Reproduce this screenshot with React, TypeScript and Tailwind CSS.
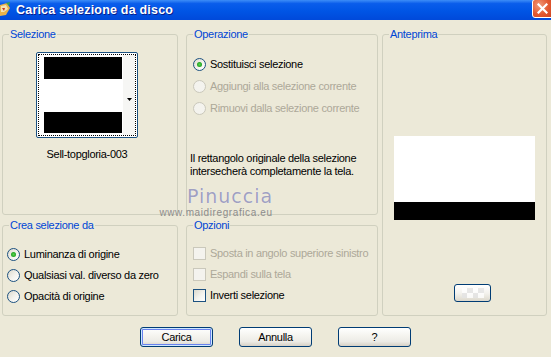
import React from 'react';

const font = "font-['Liberation_Sans',Arial,sans-serif]";

const Radio: React.FC<{ checked?: boolean; disabled?: boolean }> = ({ checked, disabled }) => (
  <span
    className={`flex h-[13px] w-[13px] shrink-0 items-center justify-center rounded-full border ${
      disabled
        ? 'border-[#CAC8BB] bg-[#F4F3EE]'
        : 'border-[#1C5180] bg-[linear-gradient(135deg,#DCD9CD_0%,#F4F3EE_55%,#FFFFFF_100%)]'
    }`}
  >
    {checked && <span className="h-[5px] w-[5px] rounded-full bg-[radial-gradient(circle,#55D34F_0%,#21A121_70%)]" />}
  </span>
);

const Check: React.FC<{ disabled?: boolean }> = ({ disabled }) => (
  <span
    className={`h-[13px] w-[13px] shrink-0 border ${
      disabled
        ? 'border-[#CAC8BB] bg-[#F4F3EE]'
        : 'border-[#1C5180] bg-[linear-gradient(135deg,#DCD9CD_0%,#F4F3EE_55%,#FFFFFF_100%)]'
    }`}
  />
);

const Row: React.FC<{ control: React.ReactNode; label: string; disabled?: boolean }> = ({ control, label, disabled }) => (
  <div className="flex h-[13px] items-center gap-1">
    {control}
    <span className={`leading-[13px] ${disabled ? 'text-[#ACA899]' : 'text-black'}`}>{label}</span>
  </div>
);

const Group: React.FC<{ title: string; className?: string; children?: React.ReactNode }> = ({ title, className, children }) => (
  <fieldset className={`min-w-0 rounded-[3px] border border-[#D0D0BF] ${className ?? ''}`}>
    <legend className="ml-[6px] px-[1px] leading-[13px] text-[#0046D5]">{title}</legend>
    {children}
  </fieldset>
);

const XPButton: React.FC<{ label: string; primary?: boolean }> = ({ label, primary }) => (
  <button
    className={`h-[20px] w-[73px] rounded-[3px] border border-[#003C74] bg-[linear-gradient(to_bottom,#FFFFFF_0%,#F4F3EE_45%,#ECEBE6_75%,#D6D0C5_100%)] leading-[13px] text-black ${
      primary ? 'shadow-[inset_0_0_0_1px_#CEE7FF,inset_0_0_0_2px_#6982EE]' : ''
    }`}
  >
    {label}
  </button>
);

export default function App() {
  return (
    <div className={`${font} relative h-[357px] w-[551px] overflow-hidden bg-[#ECE9D8] text-[11px] tracking-[-0.3px] text-black`}>
      {/* title bar */}
      <div className="flex h-[20px] items-center bg-[linear-gradient(to_bottom,#3D8DF7_0%,#0A5DEB_18%,#0055E5_55%,#0049DA_100%)]">
        <svg width="11" height="16" viewBox="0 0 11 16" className="shrink-0">
          <path d="M0 3 L7 1 L10 6 L6 13 L0 14 Z" fill="#E9B24A" />
          <path d="M1 4 L6 3 L8 7 L4 10 L1 10 Z" fill="#F4E3B0" />
          <path d="M2 6 L5 6 L4 9 Z" fill="#C0392B" />
          <path d="M6 1 L10 0 L9 4 Z" fill="#3BA14A" />
        </svg>
        <span className="ml-[5px] text-[12.5px] font-bold leading-none tracking-[0.2px] text-white [text-shadow:1px_1px_0_#0A1E8C]">
          Carica selezione da disco
        </span>
        <div className="ml-auto mr-[-4px] mt-[-3px] flex h-[19px] w-[23px] shrink-0 items-center justify-center rounded-[3px] border border-white bg-[radial-gradient(circle_at_30%_30%,#F09A7A_0%,#E2572F_50%,#C8401E_100%)]">
          <svg width="11" height="11" viewBox="0 0 11 11" className="mr-[3px]">
            <path d="M1.5 1.5 L9.5 9.5 M9.5 1.5 L1.5 9.5" stroke="white" strokeWidth="2.2" strokeLinecap="square" />
          </svg>
        </div>
      </div>

      {/* group boxes */}
      <div className="mt-[8px] grid grid-cols-[176px_200px_169px] grid-rows-[187px_97px] gap-y-[4px] pl-[2px]">
        <Group title="Selezione" className="col-start-1 row-start-1">
          <div className="flex flex-col items-center pr-[6px]">
            <div className="mt-[11px] h-[86px] w-[102px] rounded-[2px] border border-[#1C5180] bg-white p-[1px]">
              <div className="flex h-full w-full border border-dotted border-black">
                <div className="ml-[5px] flex w-[78px] flex-col justify-between py-[2px]">
                  <div className="h-[22px] bg-black" />
                  <div className="h-[21px] bg-black" />
                </div>
                <div className="ml-auto flex w-[12px] items-center justify-center bg-[#F6F6F4]">
                  <svg width="5" height="3" viewBox="0 0 5 3" className="mt-[8px]">
                    <path d="M0 0 H5 L2.5 3 Z" fill="black" />
                  </svg>
                </div>
              </div>
            </div>
            <div className="mt-[10px] leading-[13px]">Sell-topgloria-003</div>
          </div>
        </Group>

        <Group title="Operazione" className="col-start-2 row-start-1 ml-[8px]">
          <div className="mt-[17px] flex flex-col gap-[9px] pl-[6px]">
            <Row control={<Radio checked />} label="Sostituisci selezione" />
            <Row control={<Radio disabled />} label="Aggiungi alla selezione corrente" disabled />
            <Row control={<Radio disabled />} label="Rimuovi dalla selezione corrente" disabled />
          </div>
          <p className="mt-[37px] pl-[3px] leading-[13px]">
            Il rettangolo originale della selezione
            <br />
            intersecherà completamente la tela.
          </p>
        </Group>

        <Group title="Anteprima" className="col-start-3 row-span-2 row-start-1 ml-[4px]">
          <div className="flex flex-col items-center">
            <div className="mt-[95px] flex h-[84px] w-[141px] flex-col bg-white">
              <div className="mt-auto h-[18px] bg-black" />
            </div>
            <div className="ml-[16px] mt-[64px] flex h-[18px] w-[37px] items-center justify-center rounded-[3px] border border-[#003C74] bg-[linear-gradient(to_bottom,#FFFFFF_0%,#F4F3EE_50%,#DCD8CC_100%)]">
              <div className="grid h-[10px] w-[22px] grid-cols-4 grid-rows-2 opacity-80">
                <div className="bg-white" /><div className="bg-[#E4E4E4]" /><div className="bg-white" /><div className="bg-[#E4E4E4]" />
                <div className="bg-[#E4E4E4]" /><div className="bg-white" /><div className="bg-[#E4E4E4]" /><div className="bg-white" />
              </div>
            </div>
          </div>
        </Group>

        <Group title="Crea selezione da" className="col-start-1 row-start-2">
          <div className="mt-[16px] flex flex-col gap-[8px] pl-[4px]">
            <Row control={<Radio checked />} label="Luminanza di origine" />
            <Row control={<Radio />} label="Qualsiasi val. diverso da zero" />
            <Row control={<Radio />} label="Opacità di origine" />
          </div>
        </Group>

        <Group title="Opzioni" className="col-start-2 row-start-2 ml-[8px]">
          <div className="mt-[15px] flex flex-col gap-[8px] pl-[6px]">
            <Row control={<Check disabled />} label="Sposta in angolo superiore sinistro" disabled />
            <Row control={<Check disabled />} label="Espandi sulla tela" disabled />
            <Row control={<Check />} label="Inverti selezione" />
          </div>
        </Group>
      </div>

      {/* buttons */}
      <div className="mt-[11px] flex justify-center gap-[26px]">
        <XPButton label="Carica" primary />
        <XPButton label="Annulla" />
        <XPButton label="?" />
      </div>

      {/* watermark overlay */}
      <div className="pointer-events-none absolute left-[156px] top-[186px] flex w-[120px] flex-col items-center">
        <span className="ml-[28px] font-['DejaVu_Sans',sans-serif] text-[19px] leading-[21px] tracking-[1px] text-[#A0A0C0] [text-shadow:0_0_1px_#FFFFFF]">
          Pinuccia
        </span>
        <span className="text-[10px] leading-[12px] tracking-[0.6px] text-[#8C8C8C]">www.maidiregrafica.eu</span>
      </div>
    </div>
  );
}
